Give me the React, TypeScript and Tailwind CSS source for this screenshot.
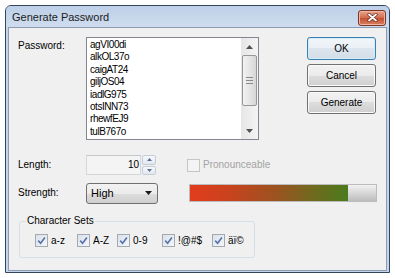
import React from "react";

const PASSWORDS = ["agVI00di", "alkOL37o", "caigAT24", "giljOS04", "iadlG975", "otsINN73", "rhewfEJ9", "tulB767o"];

const CHAR_SETS = [
  { label: "a-z", w: "w-[42px]" },
  { label: "A-Z", w: "w-[40px]" },
  { label: "0-9", w: "w-[45px]" },
  { label: "!@#$", w: "w-[50px]" },
  { label: "äï©", w: "w-[40px]" },
];

function CheckBox({ checked, disabled }: { checked?: boolean; disabled?: boolean }) {
  return (
    <span
      className={
        "flex h-[13px] w-[13px] shrink-0 items-center justify-center border " +
        (disabled
          ? "border-[#c5c5c5] bg-[#f4f4f4]"
          : "border-[#a3a9b1] bg-[linear-gradient(135deg,#dbe1ea,#f4f6f9)]")
      }
    >
      {checked && (
        <svg width="9" height="9" viewBox="0 0 9 9">
          <path d="M1.2 4.6 L3.6 7.2 L7.9 1.4" fill="none" stroke="#5572aa" strokeWidth="1.6" />
        </svg>
      )}
    </span>
  );
}

function WinButton({ children, primary }: { children: React.ReactNode; primary?: boolean }) {
  return (
    <div
      className={
        "flex h-[23px] w-[69px] items-center justify-center rounded-[3px] border text-black " +
        (primary
          ? "border-[#3c7fb1] bg-[linear-gradient(#f2f6f9_0%,#e9eff4_50%,#dde6ee_50%,#d3dde6_100%)] shadow-[inset_0_0_0_1px_#d2ecfa]"
          : "border-[#707070] bg-[linear-gradient(#f2f2f2_0%,#ebebeb_50%,#dddddd_50%,#cfcfcf_100%)] shadow-[inset_0_0_0_1px_#fafafa]")
      }
    >
      {children}
    </div>
  );
}

export default function App() {
  return (
    <div className="h-[278px] w-[395px] bg-white pl-[5px] pt-[5px] font-['Liberation_Sans',Arial,sans-serif] text-[10px] leading-[12px] text-black">
      {/* window frame */}
      <div className="flex h-[268px] w-[385px] flex-col rounded-t-[6px] border border-[#34465e] bg-[#c4d5ea]">
        {/* title bar */}
        <div className="flex h-[21px] items-center justify-between rounded-t-[5px] bg-[linear-gradient(#bdd0e8,#cfdcee)] pl-[6px] pr-[3px]">
          <span className="text-[11px] text-[#1c1c1c]">Generate Password</span>
          <div className="mt-[2px] flex h-[16px] w-[28px] items-center justify-center rounded-[3px] border border-[#7a3524] bg-[linear-gradient(#eaa58e,#d06a4c_50%,#c0502f_50%,#d98060)] shadow-[inset_0_0_0_1px_#f0b8a4]">
            <svg width="11" height="9" viewBox="0 0 11 9">
              <path d="M2 1.5 L9 7.5 M9 1.5 L2 7.5" stroke="#6d2a1b" strokeWidth="3.2" strokeLinecap="round" />
              <path d="M2 1.5 L9 7.5 M9 1.5 L2 7.5" stroke="#ffffff" strokeWidth="1.8" strokeLinecap="round" />
            </svg>
          </div>
        </div>

        {/* client area */}
        <div className="mx-[2px] mb-[1px] flex-1 border border-[#8c9db3] bg-[#f0f0f0]">
          {/* password row */}
          <div className="flex pl-[9px] pt-[9px]">
            <div className="mt-[3px] w-[68px]">Password:</div>
            <div className="flex h-[103px] w-[173px] border border-[#828790] bg-white">
              <div className="flex-1 pl-[3px] pt-px text-[10px] leading-[12.4px] tracking-[-0.45px]">
                {PASSWORDS.map((p) => (
                  <div key={p}>{p}</div>
                ))}
              </div>
              {/* scrollbar */}
              <div className="flex w-[17px] flex-col bg-[linear-gradient(to_right,#e6e6e6,#f4f4f4)]">
                <div className="flex h-[17px] items-center justify-center">
                  <svg width="7" height="4" viewBox="0 0 7 4">
                    <path d="M0 4 L3.5 0 L7 4 Z" fill="#505050" />
                  </svg>
                </div>
                <div className="mx-[1px] flex h-[51px] flex-col items-center justify-center gap-[2px] rounded-[2px] border border-[#979797] bg-[linear-gradient(to_right,#f3f3f3,#e2e2e2_60%,#d6d6d6)]">
                  <div className="h-px w-[7px] bg-[#8a8a8a]" />
                  <div className="h-px w-[7px] bg-[#8a8a8a]" />
                  <div className="h-px w-[7px] bg-[#8a8a8a]" />
                </div>
                <div className="flex-1" />
                <div className="flex h-[17px] items-center justify-center">
                  <svg width="7" height="4" viewBox="0 0 7 4">
                    <path d="M0 0 L3.5 4 L7 0 Z" fill="#505050" />
                  </svg>
                </div>
              </div>
            </div>
            <div className="ml-[48px] flex flex-col gap-[4px]">
              <WinButton primary>OK</WinButton>
              <WinButton>Cancel</WinButton>
              <WinButton>Generate</WinButton>
            </div>
          </div>

          {/* length row */}
          <div className="mt-[15px] flex h-[20px] items-center pl-[9px]">
            <div className="w-[68px]">Length:</div>
            <div className="flex h-[20px] w-[55px] items-center justify-end border border-[#d4d6da] border-t-[#c2c5ca] bg-[#f4f4f4] pr-[1px]">
              10
            </div>
            <div className="flex h-[20px] w-[15px] flex-col gap-px pl-px">
              <div className="flex flex-1 items-center justify-center rounded-[2px] border border-[#c5ccd6] bg-[linear-gradient(#f6f8fb,#e3e8ef)]">
                <svg width="5" height="3" viewBox="0 0 5 3">
                  <path d="M0 3 L2.5 0 L5 3 Z" fill="#56709a" />
                </svg>
              </div>
              <div className="flex flex-1 items-center justify-center rounded-[2px] border border-[#c5ccd6] bg-[linear-gradient(#f6f8fb,#e3e8ef)]">
                <svg width="5" height="3" viewBox="0 0 5 3">
                  <path d="M0 0 L2.5 3 L5 0 Z" fill="#56709a" />
                </svg>
              </div>
            </div>
            <div className="ml-[31px] flex items-center gap-[3px] text-[#a3a3a3]">
              <CheckBox disabled />
              <span>Pronounceable</span>
            </div>
          </div>

          {/* strength row */}
          <div className="mt-[8px] flex h-[20px] items-center pl-[9px]">
            <div className="w-[68px]">Strength:</div>
            <div className="flex h-[21px] w-[72px] items-center justify-between rounded-[3px] border border-[#707070] bg-[linear-gradient(#f2f2f2_0%,#ebebeb_50%,#dddddd_50%,#cfcfcf_100%)] pl-[4px] pr-[5px] text-[11px]">
              <span>High</span>
              <svg width="7" height="4" viewBox="0 0 7 4">
                <path d="M0 0 L3.5 4 L7 0 Z" fill="#1a1a1a" />
              </svg>
            </div>
            <div className="ml-[31px] flex h-[18px] w-[188px] border border-[#bcbcbc]">
              <div className="h-full w-[158px] bg-[linear-gradient(to_right,#e23c1c,#c8431e_25%,#9a531f_55%,#6f6a1e_78%,#4a7b1c)]" />
              <div className="h-full flex-1 bg-[linear-gradient(#f2f2f2,#dadada_45%,#bdbdbd)]" />
            </div>
          </div>

          {/* character sets */}
          <fieldset className="ml-[10px] mt-[12px] w-[236px] rounded-[3px] border border-[#d5dfe5] p-0 pb-[10px]">
            <legend className="ml-[6px] px-[1px]">Character Sets</legend>
            <div className="flex items-center pl-[15px] pt-[7px]">
              {CHAR_SETS.map((c) => (
                <div key={c.label} className={"flex items-center gap-[3px] " + c.w}>
                  <CheckBox checked />
                  <span>{c.label}</span>
                </div>
              ))}
            </div>
          </fieldset>
        </div>
      </div>
    </div>
  );
}
